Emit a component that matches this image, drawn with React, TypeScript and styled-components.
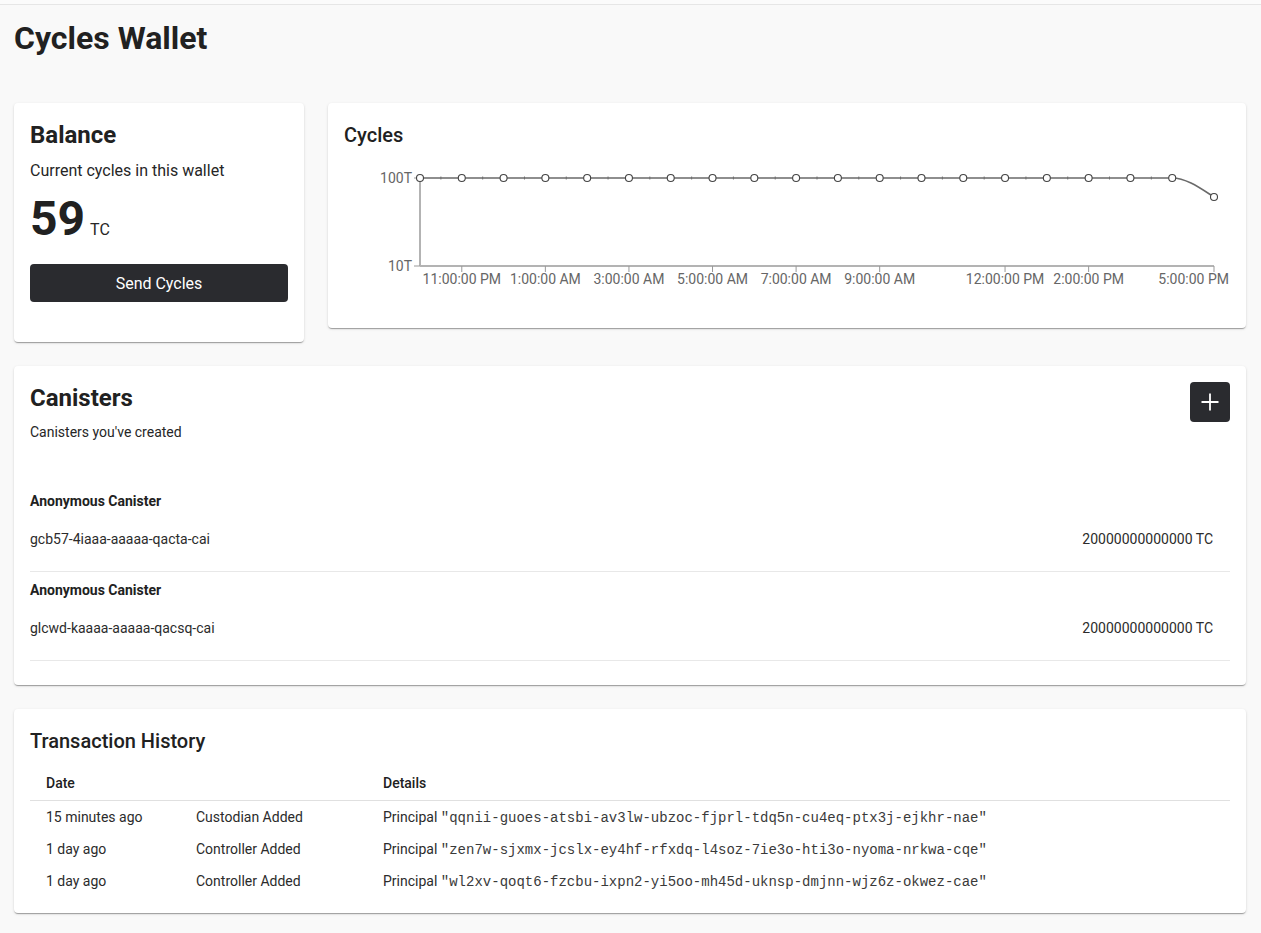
import React from "react";
import styled, { createGlobalStyle } from "styled-components";

const GlobalStyle = createGlobalStyle`
  html, body { margin: 0; padding: 0; background: #f9f9f9; }
  body {
    font-family: Roboto, "Helvetica Neue", Arial, sans-serif;
    color: rgba(0, 0, 0, 0.87);
    -webkit-font-smoothing: antialiased;
  }
  * { box-sizing: border-box; }
`;

const TopRule = styled.div`
  height: 5px;
  background: #fbfbfb;
  border-bottom: 1px solid #e6e6e6;
`;

const Main = styled.main`
  padding: 13px 15px 20px 14px;
  display: flex;
  flex-direction: column;
  gap: 24px;
`;

const PageTitle = styled.h1`
  margin: 0 0 21px;
  font-size: 32px;
  line-height: 40px;
  font-weight: 700;
  color: #212121;
`;

const TopRow = styled.div`
  display: flex;
  gap: 24px;
  align-items: flex-start;
`;

const Card = styled.section<{ $width?: number }>`
  background: #fff;
  border-radius: 4px;
  box-shadow: 0 2px 1px -1px rgba(0, 0, 0, 0.2), 0 1px 1px 0 rgba(0, 0, 0, 0.14),
    0 1px 3px 0 rgba(0, 0, 0, 0.12);
  padding: 16px;
  ${(p) => (p.$width ? `width: ${p.$width}px; flex: none;` : "flex: 1; min-width: 0;")}
`;

const CardTitle = styled.h2<{ $medium?: boolean }>`
  margin: 0;
  font-size: ${(p) => (p.$medium ? "20px" : "24px")};
  line-height: 32px;
  font-weight: ${(p) => (p.$medium ? 500 : 700)};
  color: #212121;
`;

const Subtitle = styled.p<{ $size?: number }>`
  margin: 8px 0 0;
  font-size: ${(p) => p.$size ?? 16}px;
  line-height: ${(p) => ((p.$size ?? 16) === 16 ? 24 : 20)}px;
  color: #262626;
`;

const Amount = styled.div`
  margin-top: 8px;
  height: 56px;
  font-size: 48px;
  line-height: 56px;
  white-space: nowrap;
`;

const AmountValue = styled.span`
  font-weight: 700;
  color: #212121;
`;

const AmountUnit = styled.span`
  margin-left: 5px;
  font-size: 16px;
  line-height: 1;
  color: #262626;
`;

const PrimaryButton = styled.button`
  display: block;
  width: 100%;
  height: 38px;
  margin: 17px 0 24px;
  border: none;
  border-radius: 4px;
  background: #2a2b2f;
  color: #fff;
  font-family: Roboto, Arial, sans-serif;
  font-size: 16px;
  cursor: pointer;
`;

const ChartSvg = styled.svg`
  display: block;
  width: 886px;
  height: 159px;
  margin-top: 2px;
  overflow: visible;
  font-family: Roboto, Arial, sans-serif;
`;

const CardHeader = styled.div`
  display: flex;
  justify-content: space-between;
  align-items: flex-start;
`;

const IconButton = styled.button`
  width: 40px;
  height: 40px;
  border: none;
  border-radius: 4px;
  background: #2a2b2f;
  color: #fff;
  display: flex;
  align-items: center;
  justify-content: center;
  padding: 0;
  cursor: pointer;
`;

const CanisterList = styled.ul`
  list-style: none;
  margin: 41px 0 8px;
  padding: 0;
`;

const CanisterItem = styled.li`
  padding-top: 8px;
  border-bottom: 1px solid #e8e8e8;
`;

const CanisterName = styled.div`
  font-size: 14px;
  line-height: 20px;
  font-weight: 700;
  color: #212121;
`;

const CanisterRow = styled.div`
  display: flex;
  justify-content: space-between;
  margin-top: 18px;
  padding: 0 17px 22px 0;
  font-size: 14px;
  line-height: 20px;
  color: #2b2b2b;
`;

const Table = styled.table`
  width: 100%;
  margin-top: 11px;
  border-collapse: collapse;
  font-size: 14px;
  line-height: 20px;
`;

const HeadCell = styled.th<{ $w?: number }>`
  text-align: left;
  font-weight: 500;
  color: #212121;
  padding: 5px 16px 7px;
  border-bottom: 1px solid #e0e0e0;
  ${(p) => (p.$w ? `width: ${p.$w}px;` : "")}
`;

const Cell = styled.td`
  height: 32px;
  padding: 0 16px;
  vertical-align: middle;
  color: #2b2b2b;
  white-space: nowrap;
`;

const Mono = styled.span`
  font-family: "Liberation Mono", "Courier New", monospace;
  font-size: 14px;
  line-height: 1;
  color: #3a3a3a;
`;

const X0 = 76;
const STEP = (870 - 76) / 19;
const TOP = 25;
const BOTTOM = 113;

const xTicks: { i: number; label: string }[] = [
  { i: 1, label: "11:00:00 PM" },
  { i: 3, label: "1:00:00 AM" },
  { i: 5, label: "3:00:00 AM" },
  { i: 7, label: "5:00:00 AM" },
  { i: 9, label: "7:00:00 AM" },
  { i: 11, label: "9:00:00 AM" },
  { i: 14, label: "12:00:00 PM" },
  { i: 16, label: "2:00:00 PM" },
  { i: 19, label: "5:00:00 PM" },
];

function CyclesChart() {
  const pts = Array.from({ length: 20 }, (_, i) => ({
    x: X0 + i * STEP,
    y: i === 19 ? 44 : TOP,
  }));
  const p18 = pts[18];
  const p19 = pts[19];
  const linePath = `M${pts[0].x},${TOP} L${p18.x},${TOP} C${p18.x + 14},${TOP} ${p19.x - 14},${
    p19.y - 9
  } ${p19.x},${p19.y}`;
  return (
    <ChartSvg viewBox="0 0 886 159">
      <line x1={X0} y1={TOP} x2={X0} y2={BOTTOM} stroke="#b3b3b3" strokeWidth={2} />
      <line x1={X0} y1={BOTTOM} x2={870} y2={BOTTOM} stroke="#b3b3b3" strokeWidth={2} />
      <line x1={70} y1={TOP} x2={X0} y2={TOP} stroke="#999" strokeWidth={1} />
      <line x1={70} y1={BOTTOM} x2={X0} y2={BOTTOM} stroke="#999" strokeWidth={1} />
      <text x={68} y={TOP + 5} textAnchor="end" fontSize={14} fill="#666">
        100T
      </text>
      <text x={68} y={BOTTOM + 5} textAnchor="end" fontSize={14} fill="#666">
        10T
      </text>
      {xTicks.map((t) => {
        const x = X0 + t.i * STEP;
        const last = t.i === 19;
        return (
          <g key={t.label}>
            <line x1={x} y1={BOTTOM} x2={x} y2={BOTTOM + 6} stroke="#999" strokeWidth={1} />
            <text
              x={last ? 885 : x}
              y={131}
              textAnchor={last ? "end" : "middle"}
              fontSize={14}
              fill="#666"
            >
              {t.label}
            </text>
          </g>
        );
      })}
      {pts.slice(0, 18).map((p, i) => (
        <line
          key={`m${i}`}
          x1={p.x + STEP / 2}
          y1={TOP - 1.5}
          x2={p.x + STEP / 2}
          y2={TOP + 1.5}
          stroke="#777"
          strokeWidth={1}
        />
      ))}
      <path d={linePath} fill="none" stroke="#6a6a6a" strokeWidth={1.6} />
      {pts.map((p, i) => (
        <circle key={i} cx={p.x} cy={p.y} r={3.5} fill="#fff" stroke="#444" strokeWidth={1.1} />
      ))}
    </ChartSvg>
  );
}

const canisters = [
  { name: "Anonymous Canister", id: "gcb57-4iaaa-aaaaa-qacta-cai", cycles: "20000000000000 TC" },
  { name: "Anonymous Canister", id: "glcwd-kaaaa-aaaaa-qacsq-cai", cycles: "20000000000000 TC" },
];

const transactions = [
  {
    date: "15 minutes ago",
    kind: "Custodian Added",
    principal: "qqnii-guoes-atsbi-av3lw-ubzoc-fjprl-tdq5n-cu4eq-ptx3j-ejkhr-nae",
  },
  {
    date: "1 day ago",
    kind: "Controller Added",
    principal: "zen7w-sjxmx-jcslx-ey4hf-rfxdq-l4soz-7ie3o-hti3o-nyoma-nrkwa-cqe",
  },
  {
    date: "1 day ago",
    kind: "Controller Added",
    principal: "wl2xv-qoqt6-fzcbu-ixpn2-yi5oo-mh45d-uknsp-dmjnn-wjz6z-okwez-cae",
  },
];

export default function App() {
  return (
    <>
      <GlobalStyle />
      <TopRule />
      <Main>
        <PageTitle>Cycles Wallet</PageTitle>
        <TopRow>
          <Card $width={290}>
            <CardTitle>Balance</CardTitle>
            <Subtitle>Current cycles in this wallet</Subtitle>
            <Amount>
              <AmountValue>59</AmountValue>
              <AmountUnit>TC</AmountUnit>
            </Amount>
            <PrimaryButton>Send Cycles</PrimaryButton>
          </Card>
          <Card>
            <CardTitle $medium>Cycles</CardTitle>
            <CyclesChart />
          </Card>
        </TopRow>
        <Card>
          <CardHeader>
            <div>
              <CardTitle>Canisters</CardTitle>
              <Subtitle $size={14}>Canisters you've created</Subtitle>
            </div>
            <IconButton aria-label="Create canister">
              <svg width="20" height="20" viewBox="0 0 20 20">
                <path d="M10 1.5v17M1.5 10h17" stroke="#fff" strokeWidth="1.8" fill="none" />
              </svg>
            </IconButton>
          </CardHeader>
          <CanisterList>
            {canisters.map((c) => (
              <CanisterItem key={c.id}>
                <CanisterName>{c.name}</CanisterName>
                <CanisterRow>
                  <span>{c.id}</span>
                  <span>{c.cycles}</span>
                </CanisterRow>
              </CanisterItem>
            ))}
          </CanisterList>
        </Card>
        <Card>
          <CardTitle $medium>Transaction History</CardTitle>
          <Table>
            <thead>
              <tr>
                <HeadCell $w={150}>Date</HeadCell>
                <HeadCell $w={187} />
                <HeadCell>Details</HeadCell>
              </tr>
            </thead>
            <tbody>
              {transactions.map((t) => (
                <tr key={t.principal}>
                  <Cell>{t.date}</Cell>
                  <Cell>{t.kind}</Cell>
                  <Cell>
                    Principal <Mono>"{t.principal}"</Mono>
                  </Cell>
                </tr>
              ))}
            </tbody>
          </Table>
        </Card>
      </Main>
    </>
  );
}
